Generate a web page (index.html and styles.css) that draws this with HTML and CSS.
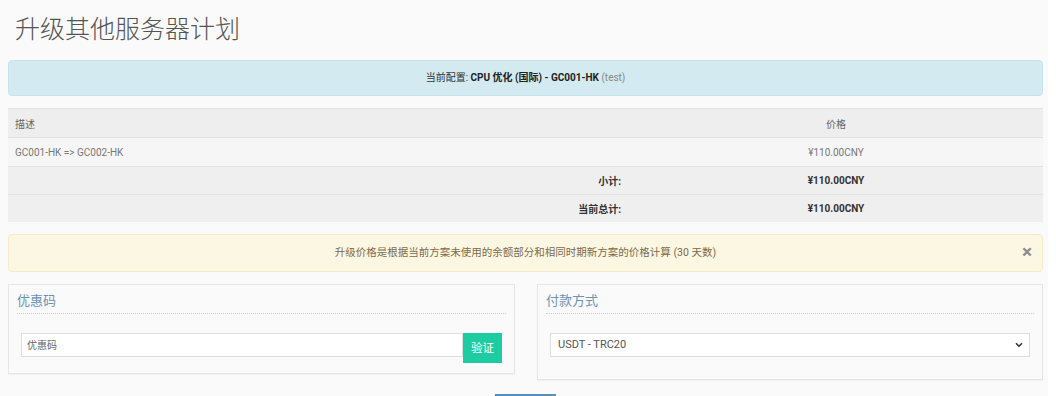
FILE: index.html
```html
<!DOCTYPE html>
<html lang="zh-CN">
<head>
<meta charset="utf-8">
<title>升级其他服务器计划</title>
<link rel="stylesheet" href="styles.css">
</head>
<body>
<div class="main">

	<h1 class="pagetitle">升级其他服务器计划</h1>

	<div class="alert alert-info">
		当前配置: <b>CPU 优化 (国际) - GC001-HK</b> <span class="muted">(test)</span>
	</div>

	<table class="summary">
		<tr class="head">
			<td class="desc">描述</td>
			<td class="price">价格</td>
		</tr>
		<tr class="item">
			<td class="desc">GC001-HK =&gt; GC002-HK</td>
			<td class="price">¥110.00CNY</td>
		</tr>
		<tr class="total">
			<td class="label">小计:</td>
			<td class="price">¥110.00CNY</td>
		</tr>
		<tr class="total">
			<td class="label">当前总计:</td>
			<td class="price">¥110.00CNY</td>
		</tr>
	</table>

	<div class="alert alert-warning">
		升级价格是根据当前方案未使用的余额部分和相同时期新方案的价格计算 (30 天数)
		<span class="close">×</span>
	</div>

	<div class="panels">
		<div class="panel">
			<div class="paneltitle">优惠码</div>
			<div class="promo">
				<input class="textbox" type="text" placeholder="优惠码">
				<span class="btn-verify">验证</span>
			</div>
		</div>

		<div class="panel">
			<div class="paneltitle">付款方式</div>
			<div class="paybox">
				<div class="selectbox">
					USDT - TRC20
					<svg class="chevron" width="8" height="6" viewBox="0 0 8 6"><path d="M1 1.2 L4 4.2 L7 1.2" fill="none" stroke="#333" stroke-width="1.6"/></svg>
				</div>
			</div>
		</div>
	</div>

	<div class="actions">
		<span class="btn-continue" aria-label="继续"></span>
	</div>

</div>
</body>
</html>
```

FILE: styles.css
```css
body {
	margin: 0;
	background: #fff;
	font-family: Roboto, "Noto Sans CJK SC", sans-serif;
	font-size: 10px;
	color: #555;
}
.main {
	width: 1048px;
	height: 396px;
	overflow: hidden;
	box-sizing: border-box;
	padding: 0 5px 0 8px;
	background: #fafafa;
}
.pagetitle {
	margin: 0;
	padding: 12px 0 0 7px;
	font-size: 25px;
	line-height: 30px;
	font-weight: 300;
	color: #555;
	font-family: "Noto Sans CJK SC", sans-serif;
}
.alert {
	position: relative;
	border: 1px solid transparent;
	border-radius: 4px;
	text-align: center;
	line-height: 14px;
}
.alert-info {
	margin-top: 18px;
	padding: 10px;
	background: #d3ebf0;
	border-color: #c4e3ea;
	color: #333;
}
.alert-info b {
	font-weight: bold;
	color: #222;
}
.muted {
	color: #888;
}
.summary {
	width: 100%;
	margin-top: 12px;
	border-collapse: collapse;
}
.summary td {
	height: 28px;
	padding: 0 7px;
	border-top: 1px solid #e2e2e2;
}
.summary .desc {
	width: 60%;
}
.summary .price {
	text-align: center;
}
.head td {
	background: #eeeeee;
	color: #666;
}
.item td {
	background: #f6f6f6;
	color: #777;
}
.total td {
	height: 27px;
	background: #efefef;
	color: #333;
	font-weight: bold;
}
.total .label {
	text-align: right;
	padding-right: 8px;
}
.alert-warning {
	margin-top: 12px;
	padding: 11px;
	background: #fcf7e3;
	border-color: #f5ebc9;
	color: #7c6a4a;
	font-size: 10.5px;
}
.close {
	position: absolute;
	right: 10px;
	top: 7px;
	font-size: 19px;
	line-height: 20px;
	font-weight: bold;
	color: #8c8c8c;
}
.panels {
	display: grid;
	grid-template-columns: 507px 506px;
	column-gap: 22px;
	align-items: start;
	margin-top: 12px;
}
.panel {
	box-sizing: border-box;
	min-width: 0;
	border: 1px solid #e6e6e6;
	background: #fafafa;
	padding: 6px 8px 10px 8px;
	box-shadow: 0 1px 1px rgba(0,0,0,0.03);
}
.paneltitle {
	font-size: 13px;
	line-height: 18px;
	color: #6d92b6;
	padding-bottom: 4px;
	border-bottom: 1px dotted #cfcfcf;
	font-family: "Noto Sans CJK SC", sans-serif;
}
.promo {
	display: flex;
	margin: 19px 4px 0 4px;
	align-items: flex-start;
}
.textbox {
	flex: 1;
	min-width: 0;
	height: 24px;
	box-sizing: border-box;
	margin: 0;
	border: 1px solid #dedede;
	background: #fff;
	padding: 0 5px;
	font-family: Roboto, "Noto Sans CJK SC", sans-serif;
	font-size: 10px;
	color: #555;
	outline: none;
}
.textbox::placeholder {
	color: #666;
}
.btn-verify {
	width: 39px;
	height: 30px;
	line-height: 30px;
	text-align: center;
	background: #1dcca1;
	color: #fff;
	font-size: 11.5px;
}
.paybox {
	margin: 19px 4px 0 4px;
	padding-bottom: 12px;
}
.selectbox {
	position: relative;
	height: 24px;
	box-sizing: border-box;
	line-height: 22px;
	border: 1px solid #dedede;
	background: #fff;
	padding: 0 7px;
	font-size: 11px;
	color: #555;
}
.chevron {
	position: absolute;
	right: 6px;
	top: 8px;
}
.actions {
	margin-top: 14px;
	text-align: center;
}
.btn-continue {
	display: inline-block;
	width: 61px;
	height: 28px;
	background: #5c8db4;
}
```
